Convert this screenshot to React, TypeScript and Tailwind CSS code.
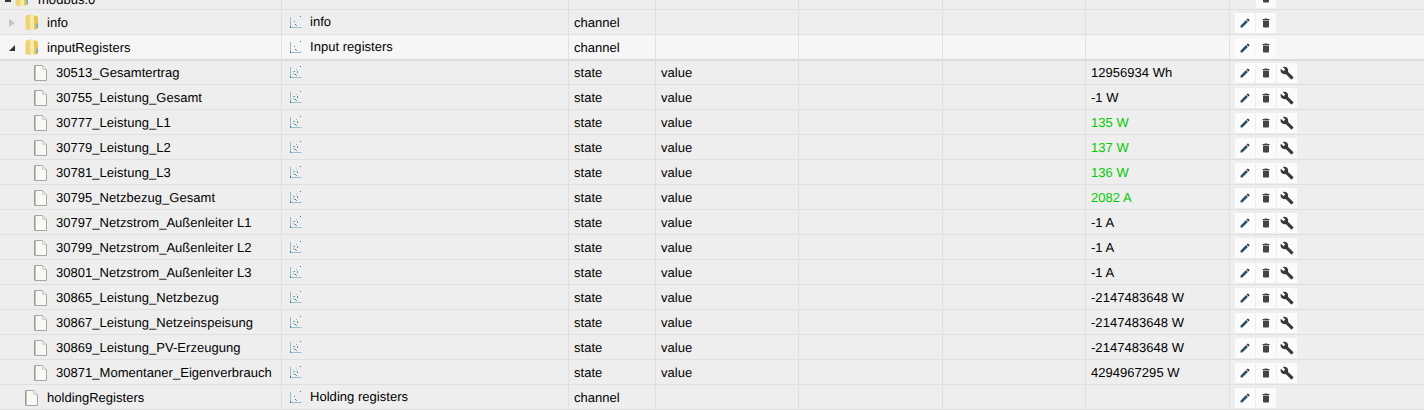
import React from "react";

const Pencil = () => (
  <svg width="12" height="12" viewBox="0 0 24 24"><path d="M3 17.25V21h3.75L17.81 9.94l-3.75-3.75L3 17.25z" fill="#2b5068"/><path d="M20.71 7.04a1 1 0 0 0 0-1.41l-2.34-2.34a1 1 0 0 0-1.41 0l-1.83 1.83 3.75 3.75 1.83-1.83z" fill="#333"/></svg>
);
const Trash = () => (
  <svg width="12" height="12" viewBox="0 0 24 24" fill="#444"><path d="M6 19c0 1.1.9 2 2 2h8c1.1 0 2-.9 2-2V7H6v12zM19 4h-3.5l-1-1h-5l-1 1H5v2h14V4z"/></svg>
);
const Wrench = () => (
  <svg width="14" height="14" viewBox="0 0 24 24" fill="#383838"><path d="M22.7 19l-9.1-9.1c.9-2.3.4-5-1.5-6.9-2-2-5-2.4-7.4-1.3L9 6 6 9 1.6 4.7C.4 7.1.9 10.1 2.9 12.1c1.9 1.9 4.6 2.4 6.9 1.5l9.1 9.1c.4.4 1 .4 1.4 0l2.3-2.3c.5-.4.5-1.1.1-1.4z"/></svg>
);
const Folder = () => (
  <svg width="14" height="17" viewBox="0 0 14 17" className="block">
    <path d="M0.5 3 Q0.5 1 3 1 L7 0.5 L7 15 Q4 16.5 2 15.5 Q0.5 15 0.5 14 Z" fill="#efd272" />
    <path d="M5 1 H9.5 V15 Q8 16 5 15.5 Z" fill="#f8e9a8" />
    <path d="M9 1.5 Q12.5 1 13 3 V14.5 Q11 15.8 9 15.2 Z" fill="#e8c654" />
    <path d="M11.5 9.5 H13 V14 H11.5 Z" fill="#62a8dc" />
  </svg>
);
const FileIcon = () => (
  <svg width="13" height="16" viewBox="0 0 13 16" className="block">
    <path d="M0.5 0.5 H8.5 L12.5 4.5 V15.5 H0.5 Z" fill="#f9f9f4" stroke="#a6a6a6" />
    <path d="M8.5 0.5 V4.5 H12.5 Z" fill="#e6e6e6" stroke="#c0c0c0" strokeWidth="0.6" />
    <path d="M1 1 V15" stroke="#8c8c8c" strokeWidth="1" />
  </svg>
);
const NameIcon = ({ dot }: { dot?: boolean }) => (
  <svg width="12" height="12" viewBox="0 0 12 12" className="block">
    <path d="M0.5 1 V11.5 H11.5" fill="none" stroke="#9dbdcb" />
    <rect x="0" y="10" width="1" height="2" fill="#3f7f9a" />
    <rect x="10" y="0" width="1" height="1" fill="#3f7f9a" />
    <rect x="4" y="5" width="1" height="1" fill="#5c97ad" />
    <rect x="5" y="8" width="1" height="1" fill="#3f7f9a" />
    <rect x="6" y="9" width="1" height="1" fill="#6ea4b8" />
    {dot && (
      <>
        <rect x="3" y="5" width="1" height="1" fill="#8fb8c8" />
        <rect x="6" y="3" width="1" height="1" fill="#8fb8c8" />
        <rect x="7" y="5" width="1" height="2" fill="#5c97ad" />
        <rect x="3" y="7" width="1" height="1" fill="#8fb8c8" />
        <rect x="4" y="8" width="1" height="1" fill="#9fc0cd" />
      </>
    )}
  </svg>
);

type R = {
  name: string;
  indent: 0 | 1;
  kind: "folder" | "file";
  arrow?: "open" | "closed";
  title?: string;
  type: string;
  role?: string;
  val?: string;
  green?: boolean;
  wrench?: boolean;
  light?: boolean;
  first?: boolean;
};

const st = (name: string, val: string, green?: boolean): R => ({ name, indent: 1, kind: "file", type: "state", role: "value", val, green, wrench: true });

const rows: R[] = [
  { name: "info", indent: 0, kind: "folder", arrow: "closed", title: "info", type: "channel" },
  { name: "inputRegisters", indent: 0, kind: "folder", arrow: "open", title: "Input registers", type: "channel", light: true },
  { ...st("30513_Gesamtertrag", "12956934 Wh"), first: true },
  st("30755_Leistung_Gesamt", "-1 W"),
  st("30777_Leistung_L1", "135 W", true),
  st("30779_Leistung_L2", "137 W", true),
  st("30781_Leistung_L3", "136 W", true),
  st("30795_Netzbezug_Gesamt", "2082 A", true),
  st("30797_Netzstrom_Außenleiter L1", "-1 A"),
  st("30799_Netzstrom_Außenleiter L2", "-1 A"),
  st("30801_Netzstrom_Außenleiter L3", "-1 A"),
  st("30865_Leistung_Netzbezug", "-2147483648 W"),
  st("30867_Leistung_Netzeinspeisung", "-2147483648 W"),
  st("30869_Leistung_PV-Erzeugung", "-2147483648 W"),
  st("30871_Momentaner_Eigenverbrauch", "4294967295 W"),
  { name: "holdingRegisters", indent: 0, kind: "file", title: "Holding registers", type: "channel" },
];

const grid = "grid grid-cols-[282px_287px_87px_143px_144px_143px_144px_1fr]";
const cell = "border-r border-[#e0e0e0] h-full flex items-center min-w-0 pt-px";

const Btn = ({ children, className = "" }: { children: React.ReactNode; className?: string }) => (
  <span className={`w-5 h-5 bg-[#fbfbfb] flex items-center justify-center ${className}`}>{children}</span>
);

const Row = ({ r }: { r: R }) => (
  <div className={`${grid} ${r.light ? "bg-[#f6f6f6]" : "bg-[#eeeeee]"} h-[25px] border-b ${r.light ? "border-[#dcdcdc]" : "border-[#dfdfdf]"} ${r.first ? "border-t border-t-[#dcdcdc]" : ""}`}>
    <div className={`${cell} ${r.first ? "pt-0" : ""}`}>
      <span className={`${r.indent ? "w-[34px]" : "w-[25px]"} shrink-0 flex justify-start pl-[9px]`}>
        {r.arrow === "closed" && <span className="mt-px w-0 h-0 border-y-[4px] border-y-transparent border-l-[6px] border-l-[#c4c4c4]" />}
        {r.arrow === "open" && <span className="mt-px w-0 h-0 border-b-[6px] border-b-[#333] border-l-[6px] border-l-transparent" />}
      </span>
      <span className="w-[22px] shrink-0">{r.kind === "folder" ? <Folder /> : <FileIcon />}</span>
      <span className="whitespace-nowrap">{r.name}</span>
    </div>
    <div className={`${cell} ${r.first ? "pt-0" : ""}`}>
      <span className="ml-[8px] w-[20px] shrink-0 -mt-[2px]"><NameIcon dot={!r.title} /></span>
      <span className="-mt-[2px]">{r.title}</span>
    </div>
    <div className={`${cell} pl-[5px] ${r.first ? "pt-0" : ""}`}>{r.type}</div>
    <div className={`${cell} pl-[5px] ${r.first ? "pt-0" : ""}`}>{r.role}</div>
    <div className={cell} />
    <div className={cell} />
    <div className={`${cell} pl-[5px] ${r.green ? "text-[#00cc00]" : ""} ${r.first ? "pt-0" : ""}`}>{r.val}</div>
    <div className={`h-full flex items-start gap-px pl-[5px] ${r.first ? "pt-[2px]" : "pt-[3px]"}`}>
      <Btn><Pencil /></Btn>
      <Btn><Trash /></Btn>
      {r.wrench && <Btn><Wrench /></Btn>}
    </div>
  </div>
);

export default function App() {
  return (
    <div className="w-[1424px] h-[410px] overflow-hidden bg-[#eeeeee] text-[13px] tracking-[0.035px] text-black [text-rendering:geometricPrecision] font-['Liberation_Sans',Arial,sans-serif]">
      <div className={`${grid} h-[10px] border-b border-[#dfdfdf] overflow-hidden items-start`}>
        <div className="border-r border-[#e0e0e0] h-full relative">
          <span className="absolute left-[38px] -top-[10px]">modbus.0</span>
          <span className="absolute left-[15px] -top-[10px]"><Folder /></span>
          <span className="absolute left-[5px] top-0 w-[6px] h-[2px] bg-[#333]" />
        </div>
        <div className={cell} /><div className={cell} /><div className={cell} />
        <div className={cell} /><div className={cell} /><div className={cell} />
        <div className="h-full pl-[26px] overflow-hidden"><Btn className="-mt-[12px]"><Trash /></Btn></div>
      </div>
      {rows.map((r) => <Row key={r.name} r={r} />)}
    </div>
  );
}
